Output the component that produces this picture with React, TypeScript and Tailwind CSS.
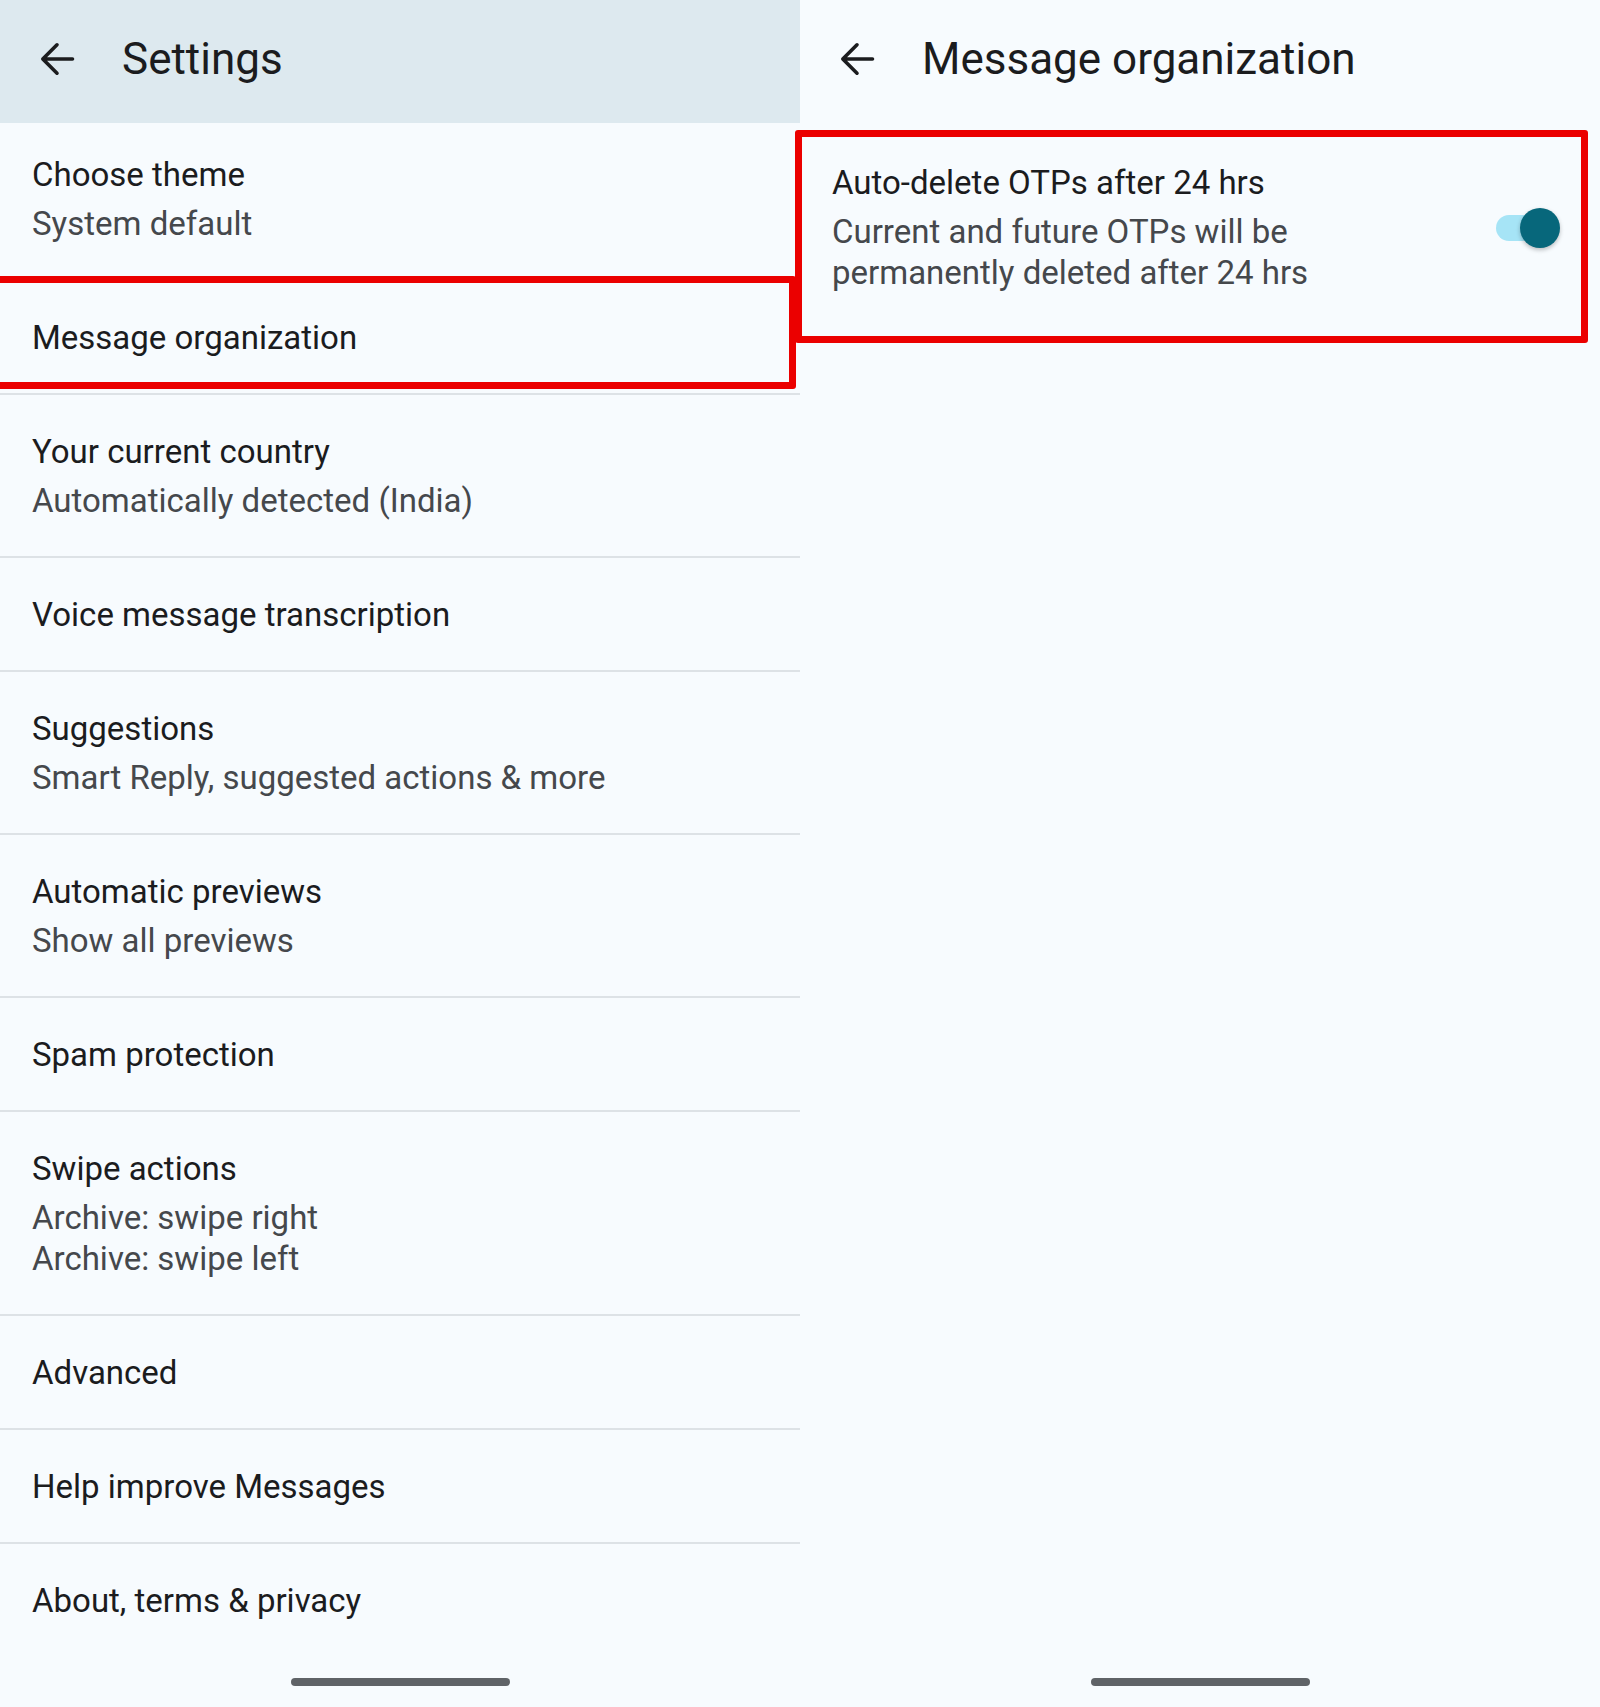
type Row = {
  title: string;
  sub?: string[];
};

const rows: Row[] = [
  { title: "Choose theme", sub: ["System default"] },
  { title: "Message organization" },
  { title: "Your current country", sub: ["Automatically detected (India)"] },
  { title: "Voice message transcription" },
  { title: "Suggestions", sub: ["Smart Reply, suggested actions & more"] },
  { title: "Automatic previews", sub: ["Show all previews"] },
  { title: "Spam protection" },
  { title: "Swipe actions", sub: ["Archive: swipe right", "Archive: swipe left"] },
  { title: "Advanced" },
  { title: "Help improve Messages" },
  { title: "About, terms & privacy" },
];

function BackArrow() {
  return (
    <svg width="48" height="48" viewBox="0 0 48 48" fill="none" className="shrink-0">
      <path
        d="M39.5 24H10.5M24 9.8L9.8 24L24 38.2"
        stroke="#1b1c1e"
        strokeWidth="3.6"
        strokeLinecap="round"
        strokeLinejoin="round"
      />
    </svg>
  );
}

function Header({ title, tinted }: { title: string; tinted?: boolean }) {
  return (
    <div
      className={`flex h-[123px] shrink-0 items-center gap-[41px] pb-[6px] pl-[33px] ${
        tinted ? "bg-[#dde9ef]" : ""
      }`}
    >
      <BackArrow />
      <span className="text-[44px] leading-[52px] text-[#1b1c1e]">{title}</span>
    </div>
  );
}

function HomePill() {
  return (
    <div className="mt-auto mb-[21px] flex justify-center">
      <div className="h-[8px] w-[219px] rounded-full bg-[#5f6367]" />
    </div>
  );
}

function Toggle() {
  return (
    <div className="relative h-[40px] w-[64px] shrink-0">
      <div className="absolute left-0 top-[7px] h-[26px] w-[60px] rounded-full bg-[#a6e4f6]" />
      <div className="absolute right-0 top-0 h-[40px] w-[40px] rounded-full bg-[#07677b] shadow-[0_2px_4px_rgba(0,0,0,0.25)]" />
    </div>
  );
}

export default function App() {
  return (
    <div className="relative flex h-[1707px] w-[1600px] overflow-hidden bg-[#f7fbfe] font-['Roboto',sans-serif]">
      {/* Settings list */}
      <div className="flex w-[800px] flex-col">
        <Header title="Settings" tinted />
        <div className="flex flex-col">
          {rows.map((row, i) => (
            <div
              key={row.title}
              className={`pl-[32px] pb-[35px] ${i === 0 ? "pt-[31px]" : "pt-[36px]"} ${
                i === rows.length - 1 ? "" : "border-b-2 border-[#dde2e6]"
              }`}
            >
              <div className="text-[33px] leading-[41px] text-[#1b1c1e]">{row.title}</div>
              {row.sub && (
                <div className="mt-[8px]">
                  {row.sub.map((s) => (
                    <div key={s} className="text-[33px] leading-[41px] text-[#45484c]">
                      {s}
                    </div>
                  ))}
                </div>
              )}
            </div>
          ))}
        </div>
        <HomePill />
      </div>

      {/* Message organization page */}
      <div className="flex w-[800px] flex-col">
        <Header title="Message organization" />
        <div className="flex items-center pl-[32px] pr-[40px] pt-[39px]">
          <div className="mr-[40px] flex-1">
            <div className="text-[33px] leading-[41px] text-[#1b1c1e]">Auto-delete OTPs after 24 hrs</div>
            <div className="mt-[8px] text-[33px] leading-[41px] text-[#45484c]">
              Current and future OTPs will be permanently deleted after 24 hrs
            </div>
          </div>
          <Toggle />
        </div>
        <HomePill />
      </div>

      {/* highlight boxes */}
      <div className="pointer-events-none absolute left-[-10px] top-[276px] h-[113px] w-[806px] rounded-[3px] border-[7px] border-[#eb0000]" />
      <div className="pointer-events-none absolute left-[795px] top-[130px] h-[213px] w-[793px] rounded-[3px] border-[7px] border-[#eb0000]" />
    </div>
  );
}
